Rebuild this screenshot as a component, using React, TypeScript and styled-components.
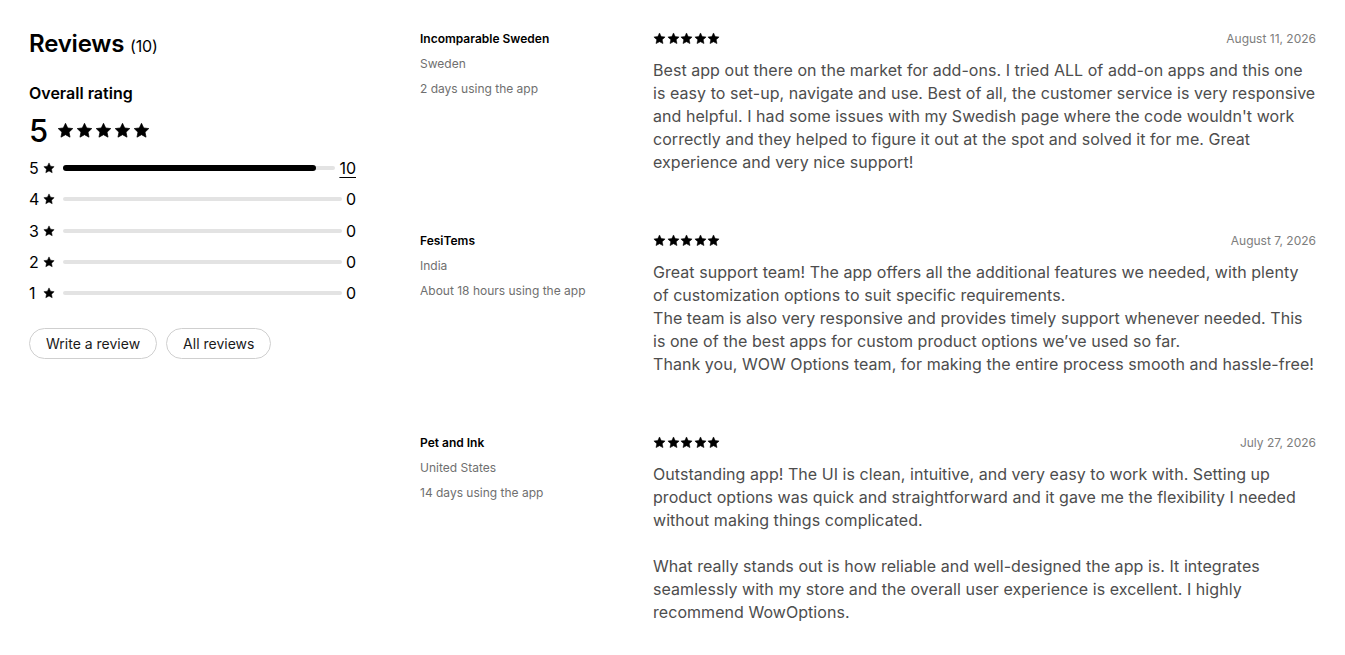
import styled, { createGlobalStyle } from 'styled-components';

const Global = createGlobalStyle`
  body {
    margin: 0;
    background: #ffffff;
    font-family: Inter, "Noto Sans", "Liberation Sans", sans-serif;
    color: #000;
  }
`;

const Page = styled.div`
  display: flex;
  padding: 30px 29px 0 29px;
`;

const Summary = styled.aside`
  width: 327px;
  flex-shrink: 0;
  margin-right: 64px;
`;

const Title = styled.h2`
  margin: 0;
  font-size: 24px;
  line-height: 28px;
  font-weight: 600;
  letter-spacing: -0.2px;
  & span {
    font-size: 16px;
    font-weight: 400;
  }
`;

const Subtitle = styled.h3`
  margin: 22px 0 0;
  font-size: 16px;
  line-height: 22px;
  font-weight: 600;
`;

const Score = styled.div`
  display: flex;
  align-items: center;
  gap: 9px;
  margin-top: 9px;
  height: 34px;
  & strong {
    font-size: 31px;
    font-weight: 500;
  }
`;

const Stars = styled.div<{ $size: number; $gap: number }>`
  display: flex;
  gap: ${p => p.$gap}px;
  & svg {
    width: ${p => p.$size}px;
    height: ${p => p.$size}px;
  }
`;

const Rows = styled.div`
  display: flex;
  flex-direction: column;
  gap: 11.25px;
  margin-top: 11px;
`;

const Row = styled.div`
  display: flex;
  align-items: center;
  height: 20px;
  font-size: 16px;
`;

const RowLabel = styled.span`
  width: 14px;
`;

const RowStar = styled.span`
  display: flex;
  width: 20px;
  & svg {
    width: 12px;
    height: 12px;
  }
`;

const Track = styled.div`
  flex: 1;
  height: 4px;
  background: #e3e3e3;
  border-radius: 2px;
  display: flex;
  align-items: center;
`;

const Fill = styled.div`
  height: 6px;
  background: #000;
  border-radius: 3px;
`;

const Count = styled.span<{ $link: boolean }>`
  margin-left: 4px;
  min-width: 9px;
  text-align: right;
  text-decoration: ${p => (p.$link ? 'underline' : 'none')};
  text-decoration-thickness: 1px;
  text-underline-offset: 3px;
`;

const Buttons = styled.div`
  display: flex;
  gap: 9px;
  margin-top: 25px;
`;

const Pill = styled.button`
  height: 31px;
  padding: 0 16px;
  border: 1px solid #cfcfcf;
  border-radius: 16px;
  background: #fff;
  font-family: inherit;
  font-size: 14px;
  color: #1a1a1a;
`;

const List = styled.main`
  flex: 1;
  display: flex;
  flex-direction: column;
`;

const Review = styled.article`
  display: grid;
  grid-template-columns: 233px 1fr;
  padding-bottom: 58px;
  &:last-child {
    padding-bottom: 20px;
  }
`;

const Author = styled.div`
  display: flex;
  flex-direction: column;
  gap: 9px;
  padding-top: 1px;
`;

const Name = styled.div`
  font-size: 12px;
  line-height: 16px;
  font-weight: 600;
  color: #000;
`;

const Meta = styled.div`
  font-size: 12px;
  line-height: 16px;
  color: #6f6f6f;
`;

const Content = styled.div`
  display: flex;
  flex-direction: column;
`;

const Head = styled.div`
  display: flex;
  justify-content: space-between;
  align-items: center;
  height: 17px;
`;

const DateText = styled.span`
  font-size: 12px;
  color: #7d7d7d;
`;

const Body = styled.p`
  margin: 12px 0 0;
  font-size: 16px;
  line-height: 23px;
  color: #4d4d4d;
  white-space: pre-line;
  letter-spacing: 0.05px;
`;

const Star = () => (
  <svg viewBox="0 0 24 24">
    <path
      fill="#000"
      d="M12 1.8l3.1 6.6 7.2.9-5.3 5 1.4 7.1L12 17.9l-6.4 3.5 1.4-7.1-5.3-5 7.2-.9z"
      strokeLinejoin="round"
      stroke="#000"
      strokeWidth="1"
    />
  </svg>
);

const FiveStars = ({ size, gap }: { size: number; gap: number }) => (
  <Stars $size={size} $gap={gap}>
    {[0, 1, 2, 3, 4].map(i => (
      <Star key={i} />
    ))}
  </Stars>
);

const breakdown = [
  { stars: 5, count: 10 },
  { stars: 4, count: 0 },
  { stars: 3, count: 0 },
  { stars: 2, count: 0 },
  { stars: 1, count: 0 },
];

const reviews = [
  {
    name: 'Incomparable Sweden',
    country: 'Sweden',
    usage: '2 days using the app',
    date: 'August 11, 2026',
    text: "Best app out there on the market for add-ons. I tried ALL of add-on apps and this one is easy to set-up, navigate and use. Best of all, the customer service is very responsive and helpful. I had some issues with my Swedish page where the code wouldn't work correctly and they helped to figure it out at the spot and solved it for me. Great experience and very nice support!",
  },
  {
    name: 'FesiTems',
    country: 'India',
    usage: 'About 18 hours using the app',
    date: 'August 7, 2026',
    text: 'Great support team! The app offers all the additional features we needed, with plenty of customization options to suit specific requirements.\nThe team is also very responsive and provides timely support whenever needed. This is one of the best apps for custom product options we\u2019ve used so far.\nThank you, WOW Options team, for making the entire process smooth and hassle-free!',
  },
  {
    name: 'Pet and Ink',
    country: 'United States',
    usage: '14 days using the app',
    date: 'July 27, 2026',
    text: 'Outstanding app! The UI is clean, intuitive, and very easy to work with. Setting up product options was quick and straightforward and it gave me the flexibility I needed without making things complicated.\n\nWhat really stands out is how reliable and well-designed the app is. It integrates seamlessly with my store and the overall user experience is excellent. I highly recommend WowOptions.',
  },
];

const total = 10;

export default function App() {
  return (
    <>
      <Global />
      <Page>
        <Summary>
          <Title>
            Reviews <span>(10)</span>
          </Title>
          <Subtitle>Overall rating</Subtitle>
          <Score>
            <strong>5</strong>
            <FiveStars size={17} gap={2} />
          </Score>
          <Rows>
            {breakdown.map(b => (
              <Row key={b.stars}>
                <RowLabel>{b.stars}</RowLabel>
                <RowStar>
                  <Star />
                </RowStar>
                <Track>
                  {b.count > 0 && <Fill style={{ width: `${(b.count / total) * 93}%` }} />}
                </Track>
                <Count $link={b.count > 0}>{b.count}</Count>
              </Row>
            ))}
          </Rows>
          <Buttons>
            <Pill>Write a review</Pill>
            <Pill>All reviews</Pill>
          </Buttons>
        </Summary>
        <List>
          {reviews.map(r => (
            <Review key={r.name}>
              <Author>
                <Name>{r.name}</Name>
                <Meta>{r.country}</Meta>
                <Meta>{r.usage}</Meta>
              </Author>
              <Content>
                <Head>
                  <FiveStars size={13} gap={0.5} />
                  <DateText>{r.date}</DateText>
                </Head>
                <Body>{r.text}</Body>
              </Content>
            </Review>
          ))}
        </List>
      </Page>
    </>
  );
}
